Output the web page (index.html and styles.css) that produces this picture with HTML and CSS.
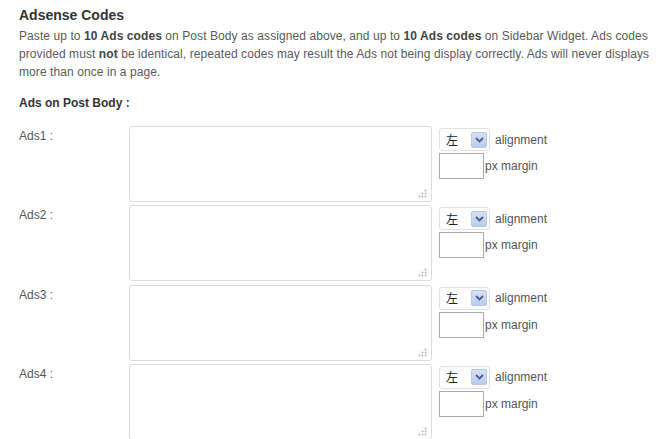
FILE: index.html
```html
<!DOCTYPE html>
<html>
<head>
<meta charset="utf-8">
<link rel="stylesheet" href="styles.css">
</head>
<body>
<div class="page">
  <h2 class="title">Adsense Codes</h2>
  <p class="desc">Paste up to <b>10 Ads codes</b> on Post Body as assigned above, and up to <b>10 Ads codes</b> on Sidebar Widget. Ads codes provided must <b>not</b> be identical, repeated codes may result the Ads not being display correctly. Ads will never displays more than once in a page.</p>
  <h3 class="sub">Ads on Post Body :</h3>

  <div class="row">
    <div class="label">Ads1 :</div>
    <div class="ta-wrap"><textarea class="code"></textarea><span class="grip"></span></div>
    <div class="opts">
      <div class="opt"><div class="sel"><span class="sel-val">左</span><span class="sel-btn"><svg width="9" height="6" viewBox="0 0 9 6"><path d="M1 1 L4.5 4.5 L8 1" fill="none" stroke="#4a5f87" stroke-width="1.8"/></svg></span></div><span class="opt-text">alignment</span></div>
      <div class="opt"><input class="px" type="text"><span class="opt-text px-text">px margin</span></div>
    </div>
  </div>

  <div class="row">
    <div class="label">Ads2 :</div>
    <div class="ta-wrap"><textarea class="code"></textarea><span class="grip"></span></div>
    <div class="opts">
      <div class="opt"><div class="sel"><span class="sel-val">左</span><span class="sel-btn"><svg width="9" height="6" viewBox="0 0 9 6"><path d="M1 1 L4.5 4.5 L8 1" fill="none" stroke="#4a5f87" stroke-width="1.8"/></svg></span></div><span class="opt-text">alignment</span></div>
      <div class="opt"><input class="px" type="text"><span class="opt-text px-text">px margin</span></div>
    </div>
  </div>

  <div class="row">
    <div class="label">Ads3 :</div>
    <div class="ta-wrap"><textarea class="code"></textarea><span class="grip"></span></div>
    <div class="opts">
      <div class="opt"><div class="sel"><span class="sel-val">左</span><span class="sel-btn"><svg width="9" height="6" viewBox="0 0 9 6"><path d="M1 1 L4.5 4.5 L8 1" fill="none" stroke="#4a5f87" stroke-width="1.8"/></svg></span></div><span class="opt-text">alignment</span></div>
      <div class="opt"><input class="px" type="text"><span class="opt-text px-text">px margin</span></div>
    </div>
  </div>

  <div class="row">
    <div class="label">Ads4 :</div>
    <div class="ta-wrap"><textarea class="code"></textarea><span class="grip"></span></div>
    <div class="opts">
      <div class="opt"><div class="sel"><span class="sel-val">左</span><span class="sel-btn"><svg width="9" height="6" viewBox="0 0 9 6"><path d="M1 1 L4.5 4.5 L8 1" fill="none" stroke="#4a5f87" stroke-width="1.8"/></svg></span></div><span class="opt-text">alignment</span></div>
      <div class="opt"><input class="px" type="text"><span class="opt-text px-text">px margin</span></div>
    </div>
  </div>
</div>
</body>
</html>
```
FILE: styles.css
```css
html, body {
  margin: 0;
  padding: 0;
  background: #fff;
}
body {
  font-family: "Liberation Sans", Arial, "Noto Sans CJK SC", sans-serif;
  font-size: 12px;
  color: #555;
  overflow: hidden;
}
.page {
  padding: 6px 0 0 19px;
}
.title {
  margin: 0;
  font-size: 14px;
  font-weight: bold;
  color: #333;
  line-height: 18px;
}
.desc {
  margin: 3px 0 0 0;
  width: 640px;
  line-height: 18px;
  letter-spacing: 0.08px;
  color: #5a5a5a;
}
.desc b {
  color: #444;
}
.sub {
  margin: 13px 0 0 0;
  font-size: 12px;
  font-weight: bold;
  color: #333;
  line-height: 18px;
}
.row {
  display: flex;
  align-items: flex-start;
  margin-top: 14px;
  height: 79.3px;
}
.row + .row {
  margin-top: 0;
}
.label {
  width: 110px;
  padding-top: 1px;
  line-height: 18px;
  color: #555;
}
.ta-wrap {
  position: relative;
  width: 303px;
  height: 76px;
}
.code {
  display: block;
  box-sizing: border-box;
  width: 303px;
  height: 76px;
  margin: 0;
  border: 1px solid #dcdcdc;
  border-radius: 3px;
  background: #fff;
  resize: none;
  outline: none;
}
.grip {
  position: absolute;
  right: 5px;
  bottom: 4px;
  width: 9px;
  height: 9px;
  background:
    radial-gradient(circle, #b8b8b8 0.9px, transparent 1.1px) 6px 0 / 3px 3px no-repeat,
    radial-gradient(circle, #b8b8b8 0.9px, transparent 1.1px) 3px 3px / 3px 3px no-repeat,
    radial-gradient(circle, #b8b8b8 0.9px, transparent 1.1px) 6px 3px / 3px 3px no-repeat,
    radial-gradient(circle, #b8b8b8 0.9px, transparent 1.1px) 0 6px / 3px 3px no-repeat,
    radial-gradient(circle, #b8b8b8 0.9px, transparent 1.1px) 3px 6px / 3px 3px no-repeat,
    radial-gradient(circle, #b8b8b8 0.9px, transparent 1.1px) 6px 6px / 3px 3px no-repeat;
}
.opts {
  margin-left: 7px;
  padding-top: 2px;
  display: flex;
  flex-direction: column;
  gap: 2px;
}
.opt {
  display: flex;
  align-items: center;
}
.sel {
  box-sizing: border-box;
  width: 51px;
  height: 23px;
  border: 1px solid #e0e0e0;
  border-radius: 3px;
  background: #fff;
  display: flex;
  align-items: center;
  justify-content: space-between;
  padding: 0 2px 0 6px;
}
.sel-val {
  font-family: "Noto Sans CJK SC", sans-serif;
  font-size: 12px;
  color: #222;
  line-height: 14px;
}
.sel-btn {
  box-sizing: border-box;
  width: 16px;
  height: 16px;
  border: 1px solid #b6c7e6;
  border-radius: 2px;
  background: linear-gradient(#d6e1f5, #b9cbee);
  display: flex;
  align-items: center;
  justify-content: center;
}
.opt-text {
  margin-left: 5px;
  color: #555;
}
.px {
  box-sizing: border-box;
  width: 45px;
  height: 26px;
  margin: 0;
  border: 1px solid #a5acb5;
  background: #fff;
  outline: none;
}
.px-text {
  margin-left: 1px;
}
```
